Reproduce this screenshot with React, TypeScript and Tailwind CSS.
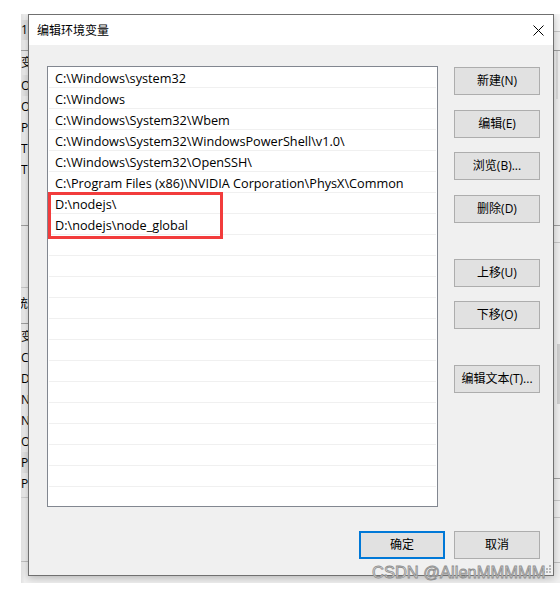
import React from "react";

const latin = "font-['Segoe_UI','Open_Sans','Noto_Sans_CJK_SC',sans-serif]";

const items = [
  "C:\\Windows\\system32",
  "C:\\Windows",
  "C:\\Windows\\System32\\Wbem",
  "C:\\Windows\\System32\\WindowsPowerShell\\v1.0\\",
  "C:\\Windows\\System32\\OpenSSH\\",
  "C:\\Program Files (x86)\\NVIDIA Corporation\\PhysX\\Common",
  "D:\\nodejs\\",
  "D:\\nodejs\\node_global",
];

const userVars = ["OneDrive", "OneDriveConsumer", "Path", "TEMP", "TMP"];
const sysVars = ["ComSpec", "DriverData", "NUMBER_OF_PROCESSORS", "NVIDIA_OPTIX", "OS", "Path", "PATHEXT"];

function Btn({ label, className = "", def = false }: { label: string; className?: string; def?: boolean }) {
  return (
    <div
      className={
        "w-[86px] h-[28px] flex items-center justify-center bg-[#e1e1e1] text-[12px] text-black leading-none " +
        (def ? "border-2 border-[#0078d7] " : "border border-[#adadad] ") +
        className
      }
    >
      {label}
    </div>
  );
}

function Line({ c = "bg-[#a0a0a0]" }: { c?: string }) {
  return <div className={"h-px w-full shrink-0 " + c} />;
}

export default function App() {
  const rows = Array.from({ length: 20 }, (_, i) => items[i] ?? "");
  return (
    <div className={"w-[560px] h-[590px] bg-white relative overflow-hidden " + latin}>
      {/* screen crop: background window with the dialog on top */}
      <div className="absolute left-[21px] top-[14px] w-[539px] h-[569px] overflow-hidden bg-[#f0f0f0] flex">
        {/* left strip of background window */}
        <div className="w-[7px] h-full overflow-hidden flex flex-col text-[12px] text-black whitespace-nowrap bg-gradient-to-r from-[#e2e2e2] to-[#f0f0f0] to-50%">
          <div className="h-[6px] shrink-0" />
          <div className="h-[20px] shrink-0 flex items-center bg-[#e0e0e0]">15</div>
          <div className="h-[10px] shrink-0" />
          <Line />
          <div className="h-[3px] shrink-0" />
          <div className="h-[18px] shrink-0 flex items-center">变量</div>
          <div className="h-[3px] shrink-0" />
          {userVars.map((v, i) => (
            <div key={v + i} className={"h-[21px] shrink-0 flex items-center " + (i === 0 ? "bg-[#e4e4e4]" : "")}>
              {v}
            </div>
          ))}
          <div className="h-[45px] shrink-0" />
          <Line />
          <div className="h-[61px] shrink-0" />
          <Line c="bg-[#c8c8c8]" />
          <div className="h-[6px] shrink-0" />
          <div className="h-[20px] shrink-0 flex items-center -ml-[5px]">统变量</div>
          <div className="h-[9px] shrink-0" />
          <Line />
          <div className="h-[3px] shrink-0" />
          <div className="h-[20px] shrink-0 flex items-center">变量</div>
          {sysVars.map((v, i) => (
            <div key={v + i} className={"h-[21px] shrink-0 flex items-center " + (i === 5 ? "bg-[#e2e2e2]" : "")}>
              {v}
            </div>
          ))}
          <div className="h-[3px] shrink-0" />
          <Line c="bg-[#d0d0d0]" />
          <div className="h-[63px] shrink-0" />
          <Line c="bg-[#c0c0c0]" />
        </div>
        <div className="w-[526px] shrink-0" />
        {/* right strip of background window */}
        <div className="w-[6px] h-full flex flex-col">
          <div className="h-[17px] shrink-0 bg-[#f7f7f7]" />
          <Line c="bg-[#c8c8c8]" />
          <div className="h-[18px] shrink-0" />
          <Line />
          <div className="h-[48px] shrink-0 pl-[2px]">
            <div className="w-[2px] h-full bg-[#dcdcdc]" />
          </div>
          <div className="h-[126px] shrink-0" />
          <Line />
          <div className="h-[16px] shrink-0" />
          <Line c="bg-[#c8c8c8]" />
          <div className="h-[101px] shrink-0" />
          <div className="h-[60px] shrink-0 pl-[3px]">
            <div className="w-[3px] h-full bg-[#d0d0d0]" />
          </div>
          <div className="h-[74px] shrink-0" />
          <Line />
          <div className="h-[21px] shrink-0" />
          <Line c="bg-[#c8c8c8]" />
          <div className="h-[16px] shrink-0" />
          <Line c="bg-[#c8c8c8]" />
          <div className="h-[44px] shrink-0" />
          <Line c="bg-[#c0c0c0]" />
        </div>

        {/* dialog window */}
        <div className="absolute left-[7px] top-0 w-[526px] h-[562px] border border-[#707070] bg-[#f0f0f0] flex flex-col shadow-[0_2px_8px_rgba(0,0,0,0.25)]">
          <div className="h-[30px] bg-white flex items-center justify-between pl-[8px] pr-[9px] shrink-0">
            <span className="text-[12px] text-black font-['Noto_Sans_CJK_SC',sans-serif]">编辑环境变量</span>
            <svg width="11" height="11" viewBox="0 0 11 11">
              <path d="M0.5 0.5 L10.5 10.5 M10.5 0.5 L0.5 10.5" stroke="#000" strokeWidth="1" />
            </svg>
          </div>
          <div className="flex-1 flex flex-col pl-[18px] pr-[13px] pt-[21px]">
            <div className="flex gap-[16px]">
              <div className="relative w-[391px] h-[441px] border border-[#828790] bg-white px-px">
                {rows.map((t, i) => (
                  <div
                    key={i}
                    className="h-[21px] border-b border-[#f0f0f0] flex items-center pt-[3px] pl-[6px] text-[12.7px] text-black whitespace-nowrap leading-none"
                  >
                    {t}
                  </div>
                ))}
                {/* red highlight annotation */}
                <div className="absolute left-0 top-[125px] w-[175px] h-[47px] border-[3px] border-[#f23c3c]" />
              </div>
              <div className="flex flex-col">
                <Btn label="新建(N)" className="mt-[1px]" />
                <Btn label="编辑(E)" className="mt-[15px]" />
                <Btn label="浏览(B)..." className="mt-[14px]" />
                <Btn label="删除(D)" className="mt-[15px]" />
                <Btn label="上移(U)" className="mt-[36px]" />
                <Btn label="下移(O)" className="mt-[14px]" />
                <Btn label="编辑文本(T)..." className="mt-[36px]" />
              </div>
            </div>
            <div className="flex justify-end gap-[9px] mt-[24px]">
              <Btn label="确定" def />
              <Btn label="取消" />
            </div>
          </div>
          {/* resize grip */}
          <svg className="absolute right-[2px] bottom-[2px]" width="8" height="8" viewBox="0 0 8 8">
            {[[6, 0], [6, 3], [3, 3], [6, 6], [3, 6], [0, 6]].map(([x, y], i) => (
              <rect key={i} x={x} y={y} width="2" height="2" fill="#b8b8b8" />
            ))}
          </svg>
        </div>
      </div>
      {/* watermark */}
      <div className="absolute left-[372px] top-[561px] text-[16.5px] leading-[22px] font-['Liberation_Sans',sans-serif] text-[#dedede] [-webkit-text-stroke:0.8px_#8e8e8e] whitespace-nowrap">
        CSDN @AllenMMMMM
      </div>
    </div>
  );
}
